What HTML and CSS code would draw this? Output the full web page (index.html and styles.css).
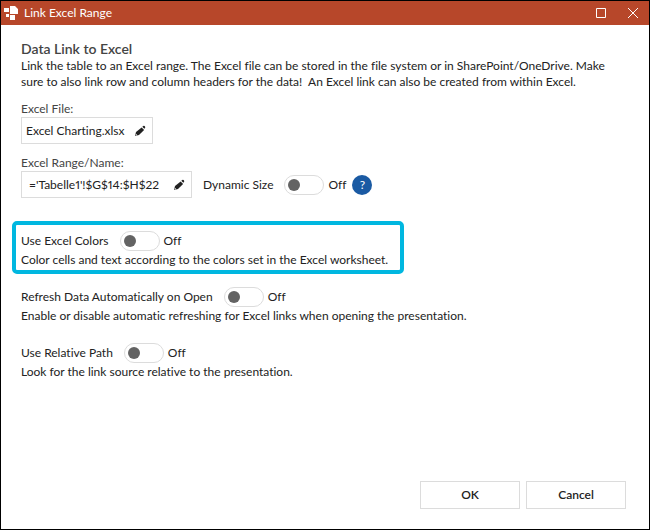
FILE: index.html
```html
<!DOCTYPE html>
<html lang="en">
<head>
  <meta charset="UTF-8" />
  <title>Link Excel Range</title>
  <link rel="stylesheet" href="styles.css">
</head>
<body>
  <div class="window">
    <header class="titlebar">
      <svg class="logo" width="14" height="14" viewBox="0 0 14 14" fill="#fff">
        <path d="M0 2h5v4H0zM6 0h5l3 3v5H6zM2 8h3v3H2zM6 9h5v5H6z" />
      </svg>
      <span class="title">Link Excel Range</span>
      <button class="window-btn" aria-label="Maximize">
        <svg width="10" height="10" viewBox="0 0 10 10" fill="none" stroke="#fff"><path d="M.5.5h9v9h-9z" /></svg>
      </button>
      <button class="window-btn" aria-label="Close">
        <svg width="10" height="10" viewBox="0 0 10 10" fill="none" stroke="#fff"><path d="M0 0l10 10M10 0L0 10" /></svg>
      </button>
    </header>

    <main class="content">
      <h1>Data Link to Excel</h1>
      <p class="intro">Link the table to an Excel range. The Excel file can be stored in the file system or in SharePoint/OneDrive. Make sure to also link row and column headers for the data!&nbsp; An Excel link can also be created from within Excel.</p>

      <div class="field">
        <label class="field-label" for="file">Excel File:</label>
        <div class="field-row">
          <div class="edit-box">
            <input id="file" class="file-input" type="text" value="Excel Charting.xlsx">
            <button class="edit-btn" aria-label="Edit file">
              <svg width="12" height="12" viewBox="0 0 12 12" fill="#222"><path d="M1 11l1-4 5.600-4.600 2.500 2.500L5 10z" /><path d="M8.300 1.800l1-.9q.7-.4 1.300.2l.5.6q.4.600-.1 1.200l-.7.900z" /><path d="M1.900 8.800l1.500 1.400-1.700.4z" fill="#fff" /></svg>
            </button>
          </div>
        </div>
      </div>

      <div class="field">
        <label class="field-label" for="range">Excel Range/Name:</label>
        <div class="field-row">
          <div class="edit-box">
            <input id="range" class="range-input" type="text" value="='Tabelle1'!$G$14:$H$22">
            <button class="edit-btn" aria-label="Edit range">
              <svg width="12" height="12" viewBox="0 0 12 12" fill="#222"><path d="M1 11l1-4 5.600-4.600 2.500 2.500L5 10z" /><path d="M8.300 1.800l1-.9q.7-.4 1.300.2l.5.6q.4.600-.1 1.200l-.7.900z" /><path d="M1.900 8.800l1.500 1.400-1.700.4z" fill="#fff" /></svg>
            </button>
          </div>
          <div class="toggle-row">
            <label for="dynamic">Dynamic Size</label>
            <input id="dynamic" class="toggle" type="checkbox">
            <span class="state">Off</span>
          </div>
          <button class="help-btn" aria-label="Help">?</button>
        </div>
      </div>

      <div class="options">
        <div class="option highlight">
          <div class="toggle-row">
            <label for="colors">Use Excel Colors</label>
            <input id="colors" class="toggle" type="checkbox">
            <span class="state">Off</span>
          </div>
          <p>Color cells and text according to the colors set in the Excel worksheet.</p>
        </div>
        <div class="option">
          <div class="toggle-row">
            <label for="refresh">Refresh Data Automatically on Open</label>
            <input id="refresh" class="toggle" type="checkbox">
            <span class="state">Off</span>
          </div>
          <p>Enable or disable automatic refreshing for Excel links when opening the presentation.</p>
        </div>
        <div class="option">
          <div class="toggle-row">
            <label for="relative">Use Relative Path</label>
            <input id="relative" class="toggle" type="checkbox">
            <span class="state">Off</span>
          </div>
          <p>Look for the link source relative to the presentation.</p>
        </div>
      </div>
    </main>

    <footer class="actions">
      <button class="action-btn">OK</button>
      <button class="action-btn">Cancel</button>
    </footer>
  </div>
</body>
</html>
```
FILE: styles.css
```css
:root {
  --accent: #b7472a;
  --border: #dcdcdc;
  --text: #222;
  --highlight: #00b7e0;
  --help: #1a5aa3;
}

* {
  box-sizing: border-box;
}

body {
  margin: 0;
  font-family: Lato, "Open Sans", sans-serif;
  font-size: 12px;
  line-height: 16px;
  font-variant-ligatures: none;
  font-variant-numeric: proportional-nums;
  color: var(--text);
  background-color: #fff;
}

button,
input {
  font: inherit;
  font-variant-numeric: inherit;
  color: inherit;
  margin: 0;
}

button {
  padding: 0;
  border: none;
  background: none;
  cursor: pointer;
}

p {
  margin: 0;
}

.window {
  display: flex;
  flex-direction: column;
  min-height: 100vh;
  border: 1px solid #000;
}

.titlebar {
  display: flex;
  align-items: center;
  height: 24px;
  padding-left: 3px;
  background-color: var(--accent);
  color: #fff;
}

.title {
  flex: 1;
  margin-left: 6px;
}

.window-btn {
  display: flex;
  align-items: center;
  justify-content: center;
  width: 32px;
  height: 24px;
}

.content {
  padding: 15px 20px;
}

h1 {
  margin: 0;
  font-size: 14px;
  line-height: 18px;
  font-weight: 600;
  color: #444;
}

.intro {
  max-width: 592px;
}

.field {
  margin-top: 11px;
}

.field-label {
  display: block;
  color: #444;
}

.field-row {
  display: flex;
  align-items: center;
}

.edit-box {
  display: flex;
  align-items: center;
  height: 27px;
  margin-right: 11px;
  padding: 0 6px 0 4px;
  border: 1px solid var(--border);
}

.edit-box input {
  padding: 0;
  border: none;
  outline: none;
  background: none;
}

.file-input {
  width: 108px;
}

.edit-box .range-input {
  width: 147px;
  padding-left: 3px;
}

.edit-btn {
  display: flex;
}

.toggle-row {
  display: flex;
  align-items: center;
  height: 20px;
}

.toggle {
  appearance: none;
  display: flex;
  align-items: center;
  width: 40px;
  height: 20px;
  padding: 0 3px;
  border: 1px solid var(--border);
  border-radius: 10px;
  cursor: pointer;
}

.toggle-row .toggle {
  margin: 0 4px 0 11px;
}

.toggle::before {
  content: "";
  width: 12px;
  height: 12px;
  border-radius: 50%;
  background-color: #636363;
}

.toggle:checked {
  justify-content: flex-end;
}

.help-btn {
  width: 20px;
  height: 20px;
  margin-left: 6px;
  border-radius: 50%;
  background-color: var(--help);
  color: #fff;
}

.options {
  margin-top: 33px;
}

.option {
  margin-bottom: 19px;
}

.option p {
  margin-top: 1px;
}

.highlight {
  width: fit-content;
  margin: -10px -9px 13px;
  padding: 6px 12px 2px 5px;
  border: 4px solid var(--highlight);
  border-radius: 5px;
}

.actions {
  display: flex;
  justify-content: flex-end;
  gap: 6px;
  margin-top: auto;
  padding: 0 23px 20px;
}

.action-btn {
  width: 100px;
  height: 28px;
  border: 1px solid var(--border);
  font-weight: 600;
}
```
